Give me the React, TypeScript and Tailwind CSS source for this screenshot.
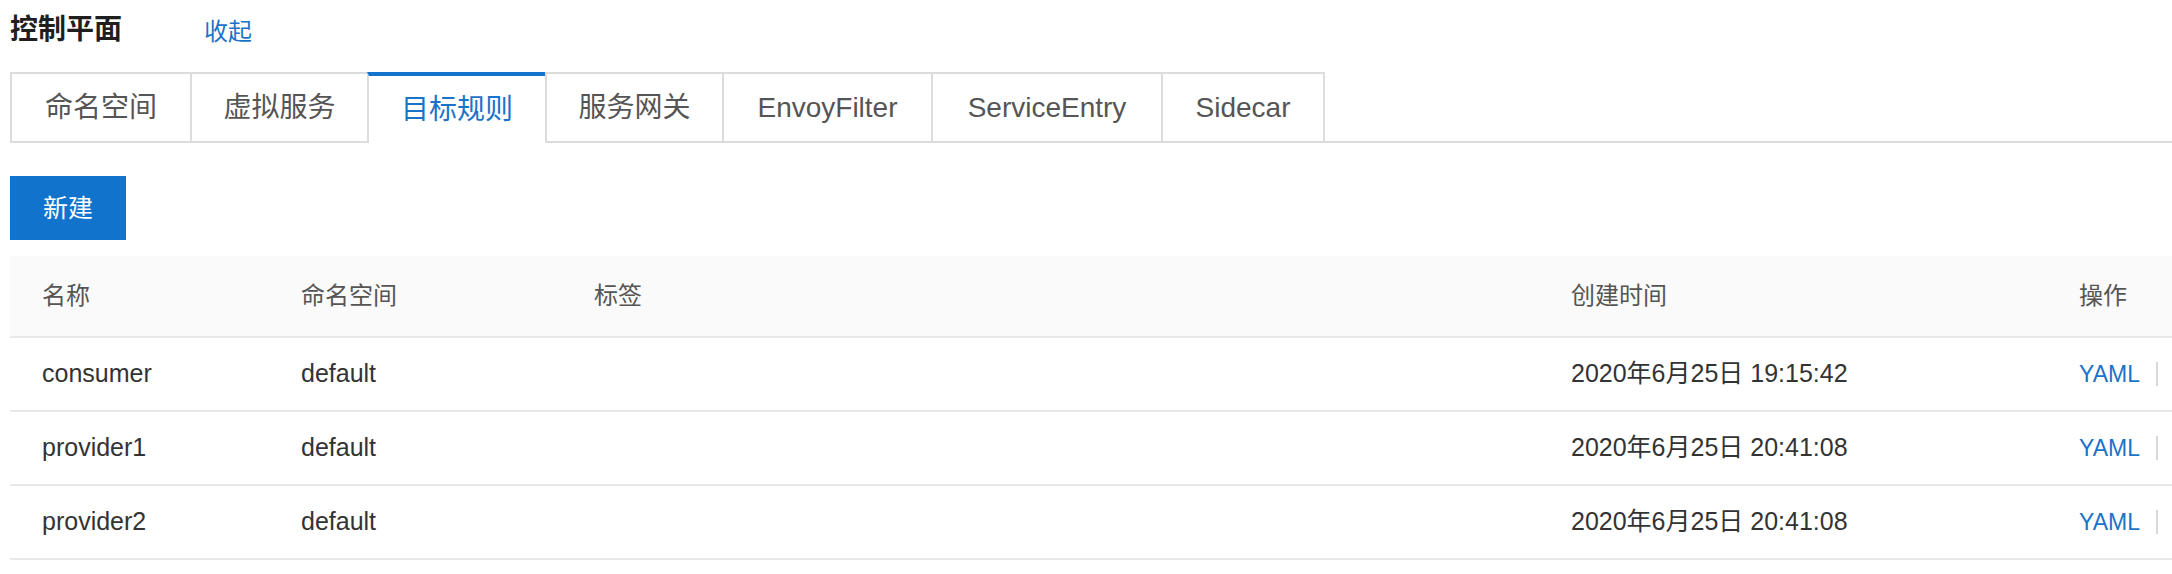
const tabs = [
  { label: '命名空间', w: 'w-[180px]' },
  { label: '虚拟服务', w: 'w-[177px]' },
  { label: '目标规则', w: 'w-[178px]' },
  { label: '服务网关', w: 'w-[177px]' },
  { label: 'EnvoyFilter', w: 'w-[209px]' },
  { label: 'ServiceEntry', w: 'w-[230px]' },
  { label: 'Sidecar', w: 'w-[164px]' },
];

const rows = [
  { name: 'consumer', ns: 'default', time: '2020年6月25日 19:15:42' },
  { name: 'provider1', ns: 'default', time: '2020年6月25日 20:41:08' },
  { name: 'provider2', ns: 'default', time: '2020年6月25日 20:41:08' },
];

const cols = 'grid grid-cols-[259px_293px_977px_508px_1fr]';

export default function App() {
  const active = 2;

  return (
    <div className="w-full overflow-hidden bg-white pl-[10px] font-['Liberation_Sans','Noto_Sans_CJK_SC',sans-serif]">
      <div className="flex h-[60px] items-center">
        <span className="text-[28px] font-bold leading-none text-[#1f1f1f]">控制平面</span>
        <a className="ml-[82px] mt-[3px] cursor-pointer text-[24px] leading-none text-[#1a73c8]">收起</a>
      </div>

      <div className="mt-[12px] flex h-[71px] border-b-2 border-[#dcdcdc]">
        {tabs.map((tab, i) => (
          <div
            key={tab.label}
            className={`flex shrink-0 items-center justify-center text-[28px] leading-none ${tab.w} ${
              i === active
                ? 'relative z-10 -mb-[2px] h-[71px] border-l-2 border-t-4 border-l-[#dcdcdc] border-t-[#1473cc] bg-white text-[#1a73c8]'
                : 'h-[69px] border-l-2 border-t-2 border-[#dcdcdc] bg-white text-[#555]'
            } ${i === tabs.length - 1 ? 'border-r-2 border-r-[#dcdcdc]' : ''}`}
          >
            {tab.label}
          </div>
        ))}
      </div>

      <div className="mt-[33px]">
        <button className="flex h-[64px] w-[116px] items-center justify-center bg-[#1173cc] text-[25px] leading-none text-white">
          新建
        </button>
      </div>

      <div className="mt-[16px]">
        <div className={`${cols} h-[82px] border-b-2 border-[#e8e8e8] bg-[#fafafa] text-[24px] text-[#555]`}>
          <div className="flex items-center pl-[32px]">名称</div>
          <div className="flex items-center pl-[32px]">命名空间</div>
          <div className="flex items-center pl-[32px]">标签</div>
          <div className="flex items-center pl-[32px]">创建时间</div>
          <div className="flex items-center pl-[32px]">操作</div>
        </div>
        {rows.map((r) => (
          <div key={r.name} className={`${cols} h-[74px] border-b-2 border-[#e8e8e8] text-[25px] text-[#333]`}>
            <div className="flex items-center pl-[32px]">{r.name}</div>
            <div className="flex items-center pl-[32px]">{r.ns}</div>
            <div className="flex items-center pl-[32px]"></div>
            <div className="flex items-center whitespace-nowrap pl-[32px]">{r.time}</div>
            <div className="flex items-center overflow-hidden whitespace-nowrap pl-[32px]">
              <a className="cursor-pointer text-[23px] text-[#1a73c8]">YAML</a>
              <span className="ml-[16px] h-[24px] w-[2px] shrink-0 bg-[#d9d9d9]"></span>
            </div>
          </div>
        ))}
      </div>
    </div>
  );
}
